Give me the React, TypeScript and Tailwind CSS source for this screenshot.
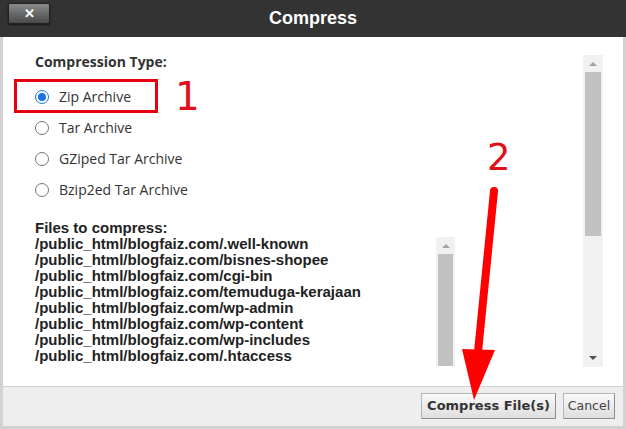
import React from 'react';

const types = ['Zip Archive', 'Tar Archive', 'GZiped Tar Archive', 'Bzip2ed Tar Archive'];

const files = [
  '/public_html/blogfaiz.com/.well-known',
  '/public_html/blogfaiz.com/bisnes-shopee',
  '/public_html/blogfaiz.com/cgi-bin',
  '/public_html/blogfaiz.com/temuduga-kerajaan',
  '/public_html/blogfaiz.com/wp-admin',
  '/public_html/blogfaiz.com/wp-content',
  '/public_html/blogfaiz.com/wp-includes',
  '/public_html/blogfaiz.com/.htaccess',
  '/public_html/blogfaiz.com/index.php',
];

function Radio({ checked }: { checked: boolean }) {
  if (checked) {
    return (
      <span className="flex h-[14px] w-[14px] shrink-0 items-center justify-center rounded-full border-[1.5px] border-[#1a73e8] bg-white">
        <span className="h-[8px] w-[8px] rounded-full bg-[#1a73e8]" />
      </span>
    );
  }
  return <span className="h-[14px] w-[14px] shrink-0 rounded-full border border-[#767676] bg-white" />;
}

function ScrollBar({ showDown }: { showDown: boolean }) {
  return (
    <div className="flex h-full w-full flex-col bg-[#f1f1f1]">
      <div className="flex h-[17px] shrink-0 items-center justify-center">
        <svg width="8" height="5" viewBox="0 0 8 5">
          <path d="M0 5 L4 1 L8 5 Z" fill="#a3a3a3" />
        </svg>
      </div>
      <div className={`mx-[2px] shrink-0 bg-[#c1c1c1] ${showDown ? 'h-[164px]' : 'flex-1'}`} />
      {showDown && (
        <>
          <div className="flex-1" />
          <div className="flex h-[17px] shrink-0 items-center justify-center">
            <svg width="8" height="5" viewBox="0 0 8 5">
              <path d="M0 0 L8 0 L4 4 Z" fill="#505050" />
            </svg>
          </div>
        </>
      )}
    </div>
  );
}

export default function App() {
  return (
    <div className="relative h-[429px] w-[626px] overflow-hidden bg-white">
      <div className="flex h-full flex-col">
        {/* title bar */}
        <div className="relative flex h-[37px] shrink-0 items-center justify-center bg-[#333333]">
          <button className="absolute left-[8px] top-[3px] flex h-[21px] w-[42px] items-center justify-center rounded-[2px] border border-[#222] bg-gradient-to-b from-[#8a8a8a] to-[#4a4a4a] shadow-[0_1px_2px_rgba(0,0,0,0.6)]">
            <span className="text-[13px] font-bold leading-none text-white [font-family:'Liberation_Sans',Arial,sans-serif]">✕</span>
          </button>
          <span className="text-[18px] font-bold text-white [font-family:'Liberation_Sans',Arial,sans-serif]">Compress</span>
        </div>

        {/* body */}
        <div className="flex h-[349px] shrink-0 border-x-[3px] border-[#d2d2d2]">
          <div className="h-[329px] flex-1 overflow-hidden pl-[32px] pt-[15px]">
            <div className="text-[14px] font-bold leading-[20px] text-[#333] [font-family:'Open_Sans',sans-serif]">
              Compression Type:
            </div>
            <div className="mt-[9px] flex flex-col">
              {types.map((t, i) => (
                <div key={t} className="flex h-[31px] items-center gap-[10px]">
                  <Radio checked={i === 0} />
                  <span className="text-[14px] text-[#333] [font-family:'Open_Sans',sans-serif]">{t}</span>
                </div>
              ))}
            </div>
            <div className="mt-[15px] text-[15px] font-bold leading-[16px] text-[#222] [font-family:'Liberation_Sans',Arial,sans-serif]">
              Files to compress:
            </div>
            <div className="flex w-[420px]">
              <div className="flex-1 text-[15px] font-bold leading-[16px] text-[#222] [font-family:'Liberation_Sans',Arial,sans-serif]">
                {files.map((f) => (
                  <div key={f}>{f}</div>
                ))}
              </div>
              <div className="mt-[1px] h-[160px] w-[19px]">
                <ScrollBar showDown={false} />
              </div>
            </div>
          </div>
          <div className="mr-[20px] mt-[18px] h-[312px] w-[20px]">
            <ScrollBar showDown />
          </div>
        </div>

        {/* footer */}
        <div className="flex flex-1 items-start justify-end gap-[7px] border-x-[3px] border-b-[3px] border-t border-[#d2d2d2] bg-[#eeeeee] pr-[8px] pt-[6px]">
          <button className="h-[26px] w-[135px] border border-[#b5b5b5] border-b-[#8d8d8d] border-r-[#8d8d8d] bg-gradient-to-b from-[#fafafa] to-[#dedede] text-[13px] font-bold text-[#333] [font-family:'DejaVu_Sans',Verdana,sans-serif]">
            Compress File(s)
          </button>
          <button className="h-[26px] w-[52px] border border-[#b5b5b5] border-b-[#8d8d8d] border-r-[#8d8d8d] bg-gradient-to-b from-[#fafafa] to-[#dedede] text-[12.5px] text-[#444] [font-family:'DejaVu_Sans',Verdana,sans-serif]">
            Cancel
          </button>
        </div>
      </div>

      {/* annotations */}
      <div className="absolute left-[14px] top-[79px] h-[34px] w-[144px] border-[3px] border-[#e60012]" />
      <span className="absolute left-[175px] top-[74px] text-[39px] font-normal leading-[46px] text-[#e0101a] [font-family:'DejaVu_Sans',sans-serif]">
        1
      </span>
      <span className="absolute left-[487px] top-[136px] text-[37px] font-normal leading-[44px] text-[#e0101a] [font-family:'DejaVu_Sans',sans-serif]">
        2
      </span>
      <svg className="absolute left-0 top-0" width="626" height="429" viewBox="0 0 626 429">
        <line x1="494" y1="191" x2="478" y2="352" stroke="#ff0000" strokeWidth="8" strokeLinecap="round" />
        <path d="M462 349 L495 350 L474 400 Z" fill="#ff0000" />
      </svg>
    </div>
  );
}
